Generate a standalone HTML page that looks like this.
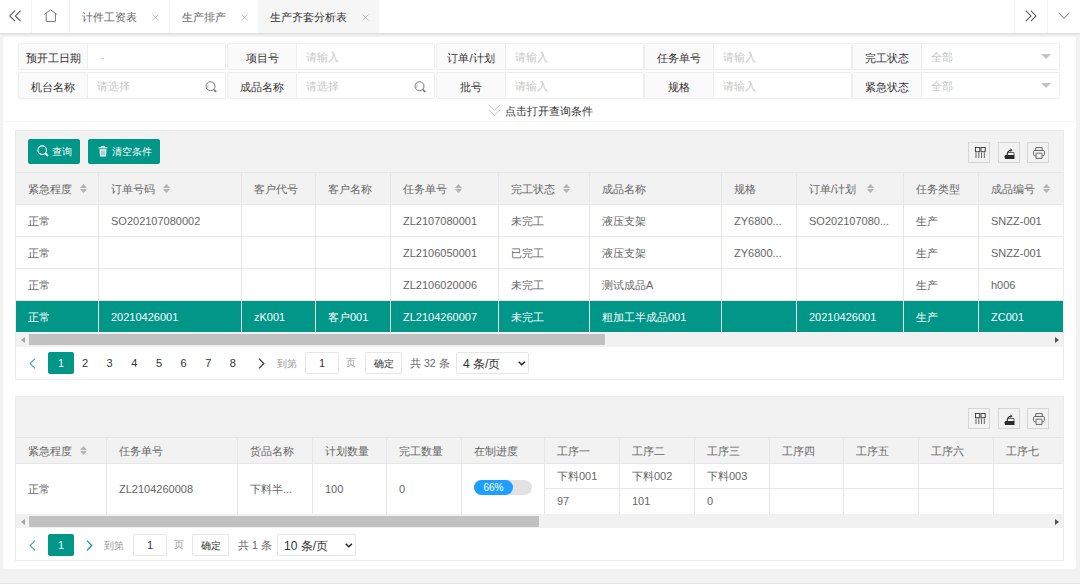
<!DOCTYPE html><html><head><meta charset="utf-8"><style>
*{box-sizing:border-box;margin:0;padding:0}
html,body{width:1080px;height:584px;overflow:hidden;background:#f2f2f2;font-family:"Liberation Sans",sans-serif;font-size:11px;color:#666}
.a{position:absolute}
svg{position:absolute;overflow:visible}
#tabs{left:0;top:0;width:1080px;height:33px;background:#fff;box-shadow:0 1px 2px rgba(0,0,0,.12)}
.sep{position:absolute;top:0;width:1px;height:33px;background:#f3f3f3}
.tt{position:absolute;top:1px;line-height:33px;white-space:nowrap}
#card{left:3px;top:37px;width:1073px;height:532px;background:#fff;border-radius:3px}
.fl{position:absolute;height:27px;background:#fafafa;border:1px solid #eee;border-radius:2px 0 0 2px;color:#333;text-align:center;line-height:29px;white-space:nowrap}
.fi{position:absolute;height:27px;background:#fff;border:1px solid #eee;border-left:none;border-radius:0 2px 2px 0;color:#c6c6c6;line-height:27px;padding-left:9px;font-size:10.5px;letter-spacing:-0.2px;white-space:nowrap}
.tc{position:absolute;left:15px;width:1049px;background:#fff;border:1px solid #ebebeb;overflow:hidden}
.t{position:absolute;white-space:nowrap}
.vl{position:absolute;width:1px;background:#e6e6e6}
.hl{position:absolute;height:1px;background:#e6e6e6}
.btn{position:absolute;background:#009688;color:#fff;border-radius:2px;height:25px;line-height:25px;white-space:nowrap}
.ib{position:absolute;width:22px;height:21px;border:1px solid #d6d6d6}
</style></head><body>
<div id="tabs" class="a">
<div class="sep" style="left:31px"></div>
<div class="sep" style="left:69px"></div>
<div class="sep" style="left:169px"></div>
<div class="sep" style="left:1014px"></div>
<div class="sep" style="left:1047px"></div>
<div class="a" style="left:258px;top:0;width:121px;height:33px;background:#f6f6f6"></div>
<div class="tt" style="left:82px;color:#666">计件工资表</div>
<div class="tt" style="left:182px;color:#666">生产排产</div>
<div class="tt" style="left:270px;color:#333">生产齐套分析表</div>
<svg style="left:152px;top:14px" width="7" height="7"><path d="M0.5 0.5L6.5 6.5M6.5 0.5L0.5 6.5" stroke="#bdbdbd" stroke-width="0.9" fill="none"/></svg>
<svg style="left:241px;top:14px" width="7" height="7"><path d="M0.5 0.5L6.5 6.5M6.5 0.5L0.5 6.5" stroke="#bdbdbd" stroke-width="0.9" fill="none"/></svg>
<svg style="left:362px;top:14px" width="7" height="7"><path d="M0.5 0.5L6.5 6.5M6.5 0.5L0.5 6.5" stroke="#bdbdbd" stroke-width="0.9" fill="none"/></svg>
<svg style="left:9px;top:10px" width="13" height="12"><path d="M6 0.6L0.8 5.9L6 11.2M11.6 0.6L6.4 5.9L11.6 11.2" stroke="#5a5a5a" stroke-width="1.1" fill="none"/></svg>
<svg style="left:44px;top:9px" width="14" height="14"><path d="M0.4 5.4L6.6 0.8L12.8 5.4M2.2 4.4V12.4H11.4V4.4" stroke="#777" stroke-width="1" fill="none"/></svg>
<svg style="left:1025px;top:10px" width="12" height="12"><path d="M0.8 0.6L6 5.9L0.8 11.2M5.8 0.6L11 5.9L5.8 11.2" stroke="#5a5a5a" stroke-width="1.1" fill="none"/></svg>
<svg style="left:1058px;top:12px" width="13" height="8"><path d="M0.6 0.8L6 6.4L11.4 0.8" stroke="#777" stroke-width="1" fill="none"/></svg>
</div>
<div id="card" class="a"></div>
<div class="fl" style="left:18px;top:43px;width:70px">预开工日期</div>
<div class="fi" style="left:88px;top:43px;width:138px;padding-left:13px">-</div>
<div class="fl" style="left:227px;top:43px;width:70px">项目号</div>
<div class="fi" style="left:297px;top:43px;width:138px">请输入</div>
<div class="fl" style="left:436px;top:43px;width:70px">订单/计划</div>
<div class="fi" style="left:506px;top:43px;width:138px">请输入</div>
<div class="fl" style="left:644px;top:43px;width:70px">任务单号</div>
<div class="fi" style="left:714px;top:43px;width:138px">请输入</div>
<div class="fl" style="left:852px;top:43px;width:70px">完工状态</div>
<div class="fi" style="left:922px;top:43px;width:138px">全部</div>
<svg style="left:1041px;top:54px" width="10" height="5"><path d="M0 0H10L5 5Z" fill="#c2c2c2"/></svg>
<div class="fl" style="left:18px;top:72px;width:70px">机台名称</div>
<div class="fi" style="left:88px;top:72px;width:138px">请选择</div>
<svg style="left:205px;top:81px" width="13" height="13"><circle cx="5.5" cy="5.2" r="4.5" stroke="#7a7a7a" stroke-width="1" fill="none"/><path d="M2.9 3.5V7" stroke="#aaa" stroke-width="0.9"/><path d="M8.9 8.6L11.2 11" stroke="#777" stroke-width="1.8"/></svg>
<div class="fl" style="left:227px;top:72px;width:70px">成品名称</div>
<div class="fi" style="left:297px;top:72px;width:138px">请选择</div>
<svg style="left:414px;top:81px" width="13" height="13"><circle cx="5.5" cy="5.2" r="4.5" stroke="#7a7a7a" stroke-width="1" fill="none"/><path d="M2.9 3.5V7" stroke="#aaa" stroke-width="0.9"/><path d="M8.9 8.6L11.2 11" stroke="#777" stroke-width="1.8"/></svg>
<div class="fl" style="left:436px;top:72px;width:70px">批号</div>
<div class="fi" style="left:506px;top:72px;width:138px">请输入</div>
<div class="fl" style="left:644px;top:72px;width:70px">规格</div>
<div class="fi" style="left:714px;top:72px;width:138px">请输入</div>
<div class="fl" style="left:852px;top:72px;width:70px">紧急状态</div>
<div class="fi" style="left:922px;top:72px;width:138px">全部</div>
<svg style="left:1041px;top:83px" width="10" height="5"><path d="M0 0H10L5 5Z" fill="#c2c2c2"/></svg>
<svg style="left:488px;top:104px" width="13" height="13"><path d="M0.7 0.7L6.5 6.3L12.3 0.7M0.7 5.7L6.5 11.3L12.3 5.7" stroke="#c8c8c8" stroke-width="1" fill="none"/></svg>
<div class="t" style="left:505px;top:104px;line-height:14px;color:#333">点击打开查询条件</div>
<div class="hl" style="left:3px;top:121px;width:1073px;background:#f6f6f6"></div>
<div class="tc" style="top:130px;height:250px"></div>
<div class="a" style="left:16px;top:131px;width:1047px;height:41px;background:#f2f2f2"></div>
<div class="btn" style="left:28px;top:139px;width:52px"></div>
<svg style="left:37px;top:145px" width="12" height="13"><circle cx="5.2" cy="5.2" r="4.3" stroke="#fff" stroke-width="1.1" fill="none"/><path d="M8.3 8.3L11 11" stroke="#fff" stroke-width="1.8"/></svg>
<div class="t" style="left:52px;top:139px;line-height:25px;color:#fff;font-size:10px">查询</div>
<div class="btn" style="left:88px;top:139px;width:72px"></div>
<svg style="left:98px;top:146px" width="10" height="11"><path d="M0.5 1.8H9.5M3.5 1.8V0.5H6.5V1.8" stroke="#fff" stroke-width="1" fill="none"/><path d="M1.5 3.3H8.5L8 10.5H2Z" fill="#fff"/><path d="M4 4.5V9.5M6 4.5V9.5" stroke="#009688" stroke-width="0.8"/></svg>
<div class="t" style="left:112px;top:139px;line-height:25px;color:#fff;font-size:10px">清空条件</div>
<div class="ib" style="left:968px;top:142px"></div>
<div class="ib" style="left:998px;top:142px"></div>
<div class="ib" style="left:1027px;top:142px"></div>
<svg style="left:975px;top:147px" width="11" height="11"><rect x="0.5" y="0.5" width="4.2" height="4.2" stroke="#444" stroke-width="1" fill="none"/><rect x="6" y="0.5" width="4.2" height="4.2" stroke="#444" stroke-width="1" fill="none"/><path d="M1 5.5V11M3.8 5.5V11M6.5 5.5V11M9.3 5.5V11" stroke="#555" stroke-width="0.9"/></svg>
<svg style="left:1004px;top:147px" width="12" height="12"><path d="M0.3 9.5L1.5 8H10.5V12H1.2Z" fill="#2a2a2a"/><path d="M3.5 5.5H10V8.2" stroke="#555" stroke-width="0.9" fill="none"/><path d="M3.2 8.3C3.2 5 4.5 3.3 7.2 3.3" stroke="#333" stroke-width="1.2" fill="none"/><path d="M6.5 1.2L8.5 3.3L6.5 5Z" fill="#333"/></svg>
<svg style="left:1033px;top:147px" width="12" height="12"><path d="M2.8 3.5V0.6H9.2V3.5" stroke="#666" stroke-width="1" fill="none"/><path d="M2.8 8.8H1.8C1.1 8.8 0.6 8.3 0.6 7.6V4.7C0.6 4 1.1 3.5 1.8 3.5H10.2C10.9 3.5 11.4 4 11.4 4.7V7.6C11.4 8.3 10.9 8.8 10.2 8.8H9.2" stroke="#666" stroke-width="1" fill="none"/><path d="M3 6.3H9V11.4H3Z" stroke="#666" stroke-width="1" fill="none"/><path d="M3 6.3H9" stroke="#999" stroke-width="1"/></svg>
<div class="a" style="left:16px;top:172px;width:1047px;height:32px;background:#f2f2f2;border-top:1px solid #e6e6e6"></div>
<div class="t" style="left:28px;top:174px;line-height:31px;color:#666">紧急程度</div>
<svg style="left:80px;top:184px" width="7" height="9"><path d="M0 4H7L3.5 0Z M0 5H7L3.5 9Z" fill="#b2b2b2"/></svg>
<div class="t" style="left:111px;top:174px;line-height:31px;color:#666">订单号码</div>
<svg style="left:163px;top:184px" width="7" height="9"><path d="M0 4H7L3.5 0Z M0 5H7L3.5 9Z" fill="#b2b2b2"/></svg>
<div class="t" style="left:254px;top:174px;line-height:31px;color:#666">客户代号</div>
<div class="t" style="left:328px;top:174px;line-height:31px;color:#666">客户名称</div>
<div class="t" style="left:403px;top:174px;line-height:31px;color:#666">任务单号</div>
<svg style="left:455px;top:184px" width="7" height="9"><path d="M0 4H7L3.5 0Z M0 5H7L3.5 9Z" fill="#b2b2b2"/></svg>
<div class="t" style="left:511px;top:174px;line-height:31px;color:#666">完工状态</div>
<svg style="left:563px;top:184px" width="7" height="9"><path d="M0 4H7L3.5 0Z M0 5H7L3.5 9Z" fill="#b2b2b2"/></svg>
<div class="t" style="left:602px;top:174px;line-height:31px;color:#666">成品名称</div>
<div class="t" style="left:734px;top:174px;line-height:31px;color:#666">规格</div>
<div class="t" style="left:809px;top:174px;line-height:31px;color:#666">订单/计划</div>
<svg style="left:867px;top:184px" width="7" height="9"><path d="M0 4H7L3.5 0Z M0 5H7L3.5 9Z" fill="#b2b2b2"/></svg>
<div class="t" style="left:916px;top:174px;line-height:31px;color:#666">任务类型</div>
<div class="t" style="left:991px;top:174px;line-height:31px;color:#666">成品编号</div>
<svg style="left:1043px;top:184px" width="7" height="9"><path d="M0 4H7L3.5 0Z M0 5H7L3.5 9Z" fill="#b2b2b2"/></svg>
<div class="hl" style="left:16px;top:204px;width:1047px"></div>
<div class="t" style="left:28px;top:206px;line-height:31px;color:#666">正常</div>
<div class="t" style="left:111px;top:206px;line-height:31px;color:#666">SO202107080002</div>
<div class="t" style="left:403px;top:206px;line-height:31px;color:#666">ZL2107080001</div>
<div class="t" style="left:511px;top:206px;line-height:31px;color:#666">未完工</div>
<div class="t" style="left:602px;top:206px;line-height:31px;color:#666">液压支架</div>
<div class="t" style="left:734px;top:206px;line-height:31px;color:#666">ZY6800...</div>
<div class="t" style="left:809px;top:206px;line-height:31px;color:#666">SO202107080...</div>
<div class="t" style="left:916px;top:206px;line-height:31px;color:#666">生产</div>
<div class="t" style="left:991px;top:206px;line-height:31px;color:#666">SNZZ-001</div>
<div class="hl" style="left:16px;top:236px;width:1047px"></div>
<div class="t" style="left:28px;top:238px;line-height:31px;color:#666">正常</div>
<div class="t" style="left:403px;top:238px;line-height:31px;color:#666">ZL2106050001</div>
<div class="t" style="left:511px;top:238px;line-height:31px;color:#666">已完工</div>
<div class="t" style="left:602px;top:238px;line-height:31px;color:#666">液压支架</div>
<div class="t" style="left:734px;top:238px;line-height:31px;color:#666">ZY6800...</div>
<div class="t" style="left:916px;top:238px;line-height:31px;color:#666">生产</div>
<div class="t" style="left:991px;top:238px;line-height:31px;color:#666">SNZZ-001</div>
<div class="hl" style="left:16px;top:268px;width:1047px"></div>
<div class="t" style="left:28px;top:270px;line-height:31px;color:#666">正常</div>
<div class="t" style="left:403px;top:270px;line-height:31px;color:#666">ZL2106020006</div>
<div class="t" style="left:511px;top:270px;line-height:31px;color:#666">未完工</div>
<div class="t" style="left:602px;top:270px;line-height:31px;color:#666">测试成品A</div>
<div class="t" style="left:916px;top:270px;line-height:31px;color:#666">生产</div>
<div class="t" style="left:991px;top:270px;line-height:31px;color:#666">h006</div>
<div class="hl" style="left:16px;top:300px;width:1047px"></div>
<div class="a" style="left:16px;top:301px;width:1047px;height:31px;background:#009688"></div>
<div class="t" style="left:28px;top:302px;line-height:31px;color:#fff">正常</div>
<div class="t" style="left:111px;top:302px;line-height:31px;color:#fff">20210426001</div>
<div class="t" style="left:254px;top:302px;line-height:31px;color:#fff">zK001</div>
<div class="t" style="left:328px;top:302px;line-height:31px;color:#fff">客户001</div>
<div class="t" style="left:403px;top:302px;line-height:31px;color:#fff">ZL2104260007</div>
<div class="t" style="left:511px;top:302px;line-height:31px;color:#fff">未完工</div>
<div class="t" style="left:602px;top:302px;line-height:31px;color:#fff">粗加工半成品001</div>
<div class="t" style="left:809px;top:302px;line-height:31px;color:#fff">20210426001</div>
<div class="t" style="left:916px;top:302px;line-height:31px;color:#fff">生产</div>
<div class="t" style="left:991px;top:302px;line-height:31px;color:#fff">ZC001</div>
<div class="vl" style="left:98px;top:172px;height:160px"></div>
<div class="vl" style="left:241px;top:172px;height:160px"></div>
<div class="vl" style="left:315px;top:172px;height:160px"></div>
<div class="vl" style="left:390px;top:172px;height:160px"></div>
<div class="vl" style="left:498px;top:172px;height:160px"></div>
<div class="vl" style="left:589px;top:172px;height:160px"></div>
<div class="vl" style="left:721px;top:172px;height:160px"></div>
<div class="vl" style="left:796px;top:172px;height:160px"></div>
<div class="vl" style="left:903px;top:172px;height:160px"></div>
<div class="vl" style="left:978px;top:172px;height:160px"></div>
<div class="a" style="left:16px;top:332px;width:1047px;height:15px;background:#f1f1f1"></div>
<div class="a" style="left:29px;top:334px;width:576px;height:11px;background:#c1c1c1"></div>
<svg style="left:21px;top:337px" width="4" height="6"><path d="M4 0V6L0 3Z" fill="#a3a3a3"/></svg>
<svg style="left:1055px;top:337px" width="4" height="6"><path d="M0 0V6L4 3Z" fill="#505050"/></svg>
<svg style="left:29px;top:358px" width="7" height="11"><path d="M6 0.7L1.2 5.5L6 10.3" stroke="#2aa89c" stroke-width="1.05" fill="none"/></svg>
<div class="a" style="left:48px;top:352px;width:26px;height:22px;background:#009688;border-radius:2px;color:#fff;text-align:center;line-height:22px">1</div>
<div class="t" style="left:75px;top:352px;width:20px;text-align:center;line-height:22px;color:#333">2</div>
<div class="t" style="left:99.65px;top:352px;width:20px;text-align:center;line-height:22px;color:#333">3</div>
<div class="t" style="left:124.30000000000001px;top:352px;width:20px;text-align:center;line-height:22px;color:#333">4</div>
<div class="t" style="left:148.95000000000002px;top:352px;width:20px;text-align:center;line-height:22px;color:#333">5</div>
<div class="t" style="left:173.60000000000002px;top:352px;width:20px;text-align:center;line-height:22px;color:#333">6</div>
<div class="t" style="left:198.25000000000003px;top:352px;width:20px;text-align:center;line-height:22px;color:#333">7</div>
<div class="t" style="left:222.90000000000003px;top:352px;width:20px;text-align:center;line-height:22px;color:#333">8</div>
<svg style="left:258px;top:358px" width="7" height="11"><path d="M1 0.7L5.8 5.5L1 10.3" stroke="#333" stroke-width="1.2" fill="none"/></svg>
<div class="t" style="left:277px;top:352px;line-height:23px;color:#999;font-size:10px">到第</div>
<div class="a" style="left:305px;top:352px;width:34px;height:22px;border:1px solid #e6e6e6;border-radius:2px;text-align:center;line-height:21px;color:#333;font-size:11px">1</div>
<div class="t" style="left:346px;top:352px;line-height:22px;color:#999;font-size:10px">页</div>
<div class="a" style="left:365px;top:352px;width:37px;height:22px;border:1px solid #e6e6e6;border-radius:2px;text-align:center;line-height:21px;color:#333;font-size:10px">确定</div>
<div class="t" style="left:410px;top:352px;line-height:22px;color:#666;font-size:10.5px">共 32 条</div>
<div class="a" style="left:456px;top:352px;width:73px;height:22px;border:1px solid #e6e6e6;border-radius:2px;line-height:22px;color:#333;font-size:12px;padding-left:6px">4 条/页</div>
<svg style="left:518px;top:361px" width="8" height="5"><path d="M0.7 0.7L3.8 3.8L6.9 0.7" stroke="#222" stroke-width="1.5" fill="none"/></svg>
<div class="tc" style="top:396px;height:165px"></div>
<div class="a" style="left:16px;top:397px;width:1047px;height:40px;background:#f2f2f2"></div>
<div class="ib" style="left:968px;top:408px"></div>
<div class="ib" style="left:998px;top:408px"></div>
<div class="ib" style="left:1027px;top:408px"></div>
<svg style="left:975px;top:413px" width="11" height="11"><rect x="0.5" y="0.5" width="4.2" height="4.2" stroke="#444" stroke-width="1" fill="none"/><rect x="6" y="0.5" width="4.2" height="4.2" stroke="#444" stroke-width="1" fill="none"/><path d="M1 5.5V11M3.8 5.5V11M6.5 5.5V11M9.3 5.5V11" stroke="#555" stroke-width="0.9"/></svg>
<svg style="left:1004px;top:413px" width="12" height="12"><path d="M0.3 9.5L1.5 8H10.5V12H1.2Z" fill="#2a2a2a"/><path d="M3.5 5.5H10V8.2" stroke="#555" stroke-width="0.9" fill="none"/><path d="M3.2 8.3C3.2 5 4.5 3.3 7.2 3.3" stroke="#333" stroke-width="1.2" fill="none"/><path d="M6.5 1.2L8.5 3.3L6.5 5Z" fill="#333"/></svg>
<svg style="left:1033px;top:413px" width="12" height="12"><path d="M2.8 3.5V0.6H9.2V3.5" stroke="#666" stroke-width="1" fill="none"/><path d="M2.8 8.8H1.8C1.1 8.8 0.6 8.3 0.6 7.6V4.7C0.6 4 1.1 3.5 1.8 3.5H10.2C10.9 3.5 11.4 4 11.4 4.7V7.6C11.4 8.3 10.9 8.8 10.2 8.8H9.2" stroke="#666" stroke-width="1" fill="none"/><path d="M3 6.3H9V11.4H3Z" stroke="#666" stroke-width="1" fill="none"/><path d="M3 6.3H9" stroke="#999" stroke-width="1"/></svg>
<div class="a" style="left:16px;top:437px;width:1047px;height:26px;background:#f2f2f2;border-top:1px solid #e6e6e6"></div>
<div class="t" style="left:28px;top:439px;line-height:25px;color:#666">紧急程度</div>
<svg style="left:80px;top:446px" width="7" height="9"><path d="M0 4H7L3.5 0Z M0 5H7L3.5 9Z" fill="#b2b2b2"/></svg>
<div class="t" style="left:119px;top:439px;line-height:25px;color:#666">任务单号</div>
<div class="t" style="left:250px;top:439px;line-height:25px;color:#666">货品名称</div>
<div class="t" style="left:325px;top:439px;line-height:25px;color:#666">计划数量</div>
<div class="t" style="left:399px;top:439px;line-height:25px;color:#666">完工数量</div>
<div class="t" style="left:474px;top:439px;line-height:25px;color:#666">在制进度</div>
<div class="t" style="left:557px;top:439px;line-height:25px;color:#666">工序一</div>
<div class="t" style="left:632px;top:439px;line-height:25px;color:#666">工序二</div>
<div class="t" style="left:707px;top:439px;line-height:25px;color:#666">工序三</div>
<div class="t" style="left:782px;top:439px;line-height:25px;color:#666">工序四</div>
<div class="t" style="left:856px;top:439px;line-height:25px;color:#666">工序五</div>
<div class="t" style="left:931px;top:439px;line-height:25px;color:#666">工序六</div>
<div class="t" style="left:1006px;top:439px;line-height:25px;color:#666">工序七</div>
<div class="hl" style="left:16px;top:463px;width:1047px"></div>
<div class="t" style="left:28px;top:464px;line-height:50px;color:#666">正常</div>
<div class="t" style="left:119px;top:464px;line-height:50px;color:#666">ZL2104260008</div>
<div class="t" style="left:250px;top:464px;line-height:50px;color:#666">下料半...</div>
<div class="t" style="left:325px;top:464px;line-height:50px;color:#666">100</div>
<div class="t" style="left:399px;top:464px;line-height:50px;color:#666">0</div>
<div class="a" style="left:474px;top:480px;width:58px;height:15px;border-radius:8px;background:#e2e2e2"></div>
<div class="a" style="left:474px;top:480px;width:39px;height:15px;border-radius:8px;background:#1e9fff;color:#fff;text-align:center;line-height:15px;font-size:10px">66%</div>
<div class="t" style="left:557px;top:464px;line-height:24px;color:#666">下料001</div>
<div class="t" style="left:557px;top:489px;line-height:25px;color:#666">97</div>
<div class="t" style="left:632px;top:464px;line-height:24px;color:#666">下料002</div>
<div class="t" style="left:632px;top:489px;line-height:25px;color:#666">101</div>
<div class="t" style="left:707px;top:464px;line-height:24px;color:#666">下料003</div>
<div class="t" style="left:707px;top:489px;line-height:25px;color:#666">0</div>
<div class="hl" style="left:544px;top:488px;width:520px"></div>
<div class="vl" style="left:106px;top:437px;height:77px"></div>
<div class="vl" style="left:237px;top:437px;height:77px"></div>
<div class="vl" style="left:312px;top:437px;height:77px"></div>
<div class="vl" style="left:386px;top:437px;height:77px"></div>
<div class="vl" style="left:461px;top:437px;height:77px"></div>
<div class="vl" style="left:544px;top:437px;height:77px"></div>
<div class="vl" style="left:619px;top:437px;height:77px"></div>
<div class="vl" style="left:694px;top:437px;height:77px"></div>
<div class="vl" style="left:769px;top:437px;height:77px"></div>
<div class="vl" style="left:843px;top:437px;height:77px"></div>
<div class="vl" style="left:918px;top:437px;height:77px"></div>
<div class="vl" style="left:993px;top:437px;height:77px"></div>
<div class="a" style="left:16px;top:514px;width:1047px;height:14px;background:#f1f1f1"></div>
<div class="a" style="left:29px;top:516px;width:510px;height:11px;background:#c1c1c1"></div>
<svg style="left:21px;top:519px" width="4" height="6"><path d="M4 0V6L0 3Z" fill="#a3a3a3"/></svg>
<svg style="left:1055px;top:519px" width="4" height="6"><path d="M0 0V6L4 3Z" fill="#505050"/></svg>
<svg style="left:29px;top:540px" width="7" height="11"><path d="M6 0.7L1.2 5.5L6 10.3" stroke="#2aa89c" stroke-width="1.05" fill="none"/></svg>
<div class="a" style="left:48px;top:534px;width:26px;height:22px;background:#009688;border-radius:2px;color:#fff;text-align:center;line-height:22px">1</div>
<svg style="left:86px;top:540px" width="7" height="11"><path d="M1 0.7L5.8 5.5L1 10.3" stroke="#009688" stroke-width="1.2" fill="none"/></svg>
<div class="t" style="left:104px;top:534px;line-height:23px;color:#999;font-size:10px">到第</div>
<div class="a" style="left:133px;top:534px;width:34px;height:22px;border:1px solid #e6e6e6;border-radius:2px;text-align:center;line-height:21px;color:#333;font-size:11px">1</div>
<div class="t" style="left:174px;top:534px;line-height:22px;color:#999;font-size:10px">页</div>
<div class="a" style="left:192px;top:534px;width:37px;height:22px;border:1px solid #e6e6e6;border-radius:2px;text-align:center;line-height:21px;color:#333;font-size:10px">确定</div>
<div class="t" style="left:238px;top:534px;line-height:22px;color:#666;font-size:10.5px">共 1 条</div>
<div class="a" style="left:277px;top:534px;width:79px;height:22px;border:1px solid #e6e6e6;border-radius:2px;line-height:22px;color:#333;font-size:12px;padding-left:6px">10 条/页</div>
<svg style="left:345px;top:543px" width="8" height="5"><path d="M0.7 0.7L3.8 3.8L6.9 0.7" stroke="#222" stroke-width="1.5" fill="none"/></svg>
<div class="hl" style="left:0;top:583px;width:1080px;background:#e4e4e4"></div>
</body></html>
